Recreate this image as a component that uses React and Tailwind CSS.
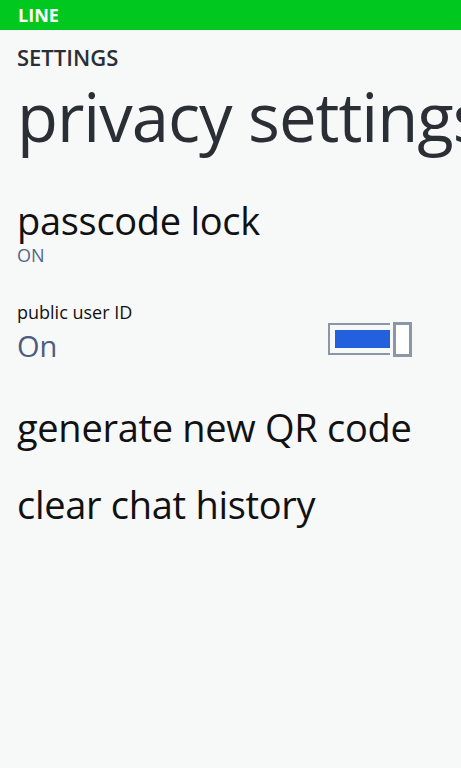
export default function App() {
  return (
    <div className="min-h-screen bg-[#f7f8f8] overflow-hidden" style={{ fontFamily: '"Open Sans", "Noto Sans", sans-serif' }}>
      {/* status bar */}
      <div className="h-[30px] bg-[#00c81e] flex items-center px-[18px]">
        <span className="text-white font-bold text-[18px] leading-none">LINE</span>
      </div>

      <div className="pl-[17px]">
        <div className="mt-[14px] text-[22px] font-semibold text-[#2a2f36] leading-[26px]">SETTINGS</div>
        <h1 className="mt-[6px] text-[67px] leading-[80px] text-[#2a2f36] whitespace-nowrap tracking-[-1px]">privacy settings</h1>

        {/* passcode lock */}
        <div className="mt-[42px]">
          <div className="text-[38px] leading-[44px] text-[#111] tracking-[-0.3px]">passcode lock</div>
          <div className="text-[18px] leading-[20px] text-[#56648a] mt-[3px]">ON</div>
        </div>

        {/* public user id */}
        <div className="mt-[35px] flex items-center pr-[49px]">
          <div className="flex-1">
            <div className="text-[18px] leading-[24px] text-[#111]">public user ID</div>
            <div className="text-[29px] leading-[44px] text-[#4e5b80]">On</div>
          </div>
          <div className="flex items-center mt-[10px]">
            <div className="w-[62px] h-[32px] border-2 border-r-0 border-[#8d95a8] p-[5px] pr-0">
              <div className="h-full bg-[#2260dd]"></div>
            </div>
            <div className="w-[19px] h-[35px] border-[3px] border-[#8d95a8] bg-white ml-[3px]"></div>
          </div>
        </div>

        <div className="mt-[34px] text-[38px] leading-[50px] text-[#111] tracking-[-0.3px] whitespace-nowrap">generate new QR code</div>
        <div className="mt-[27px] text-[38px] leading-[50px] text-[#111] tracking-[-0.3px]">clear chat history</div>
      </div>
    </div>
  );
}
